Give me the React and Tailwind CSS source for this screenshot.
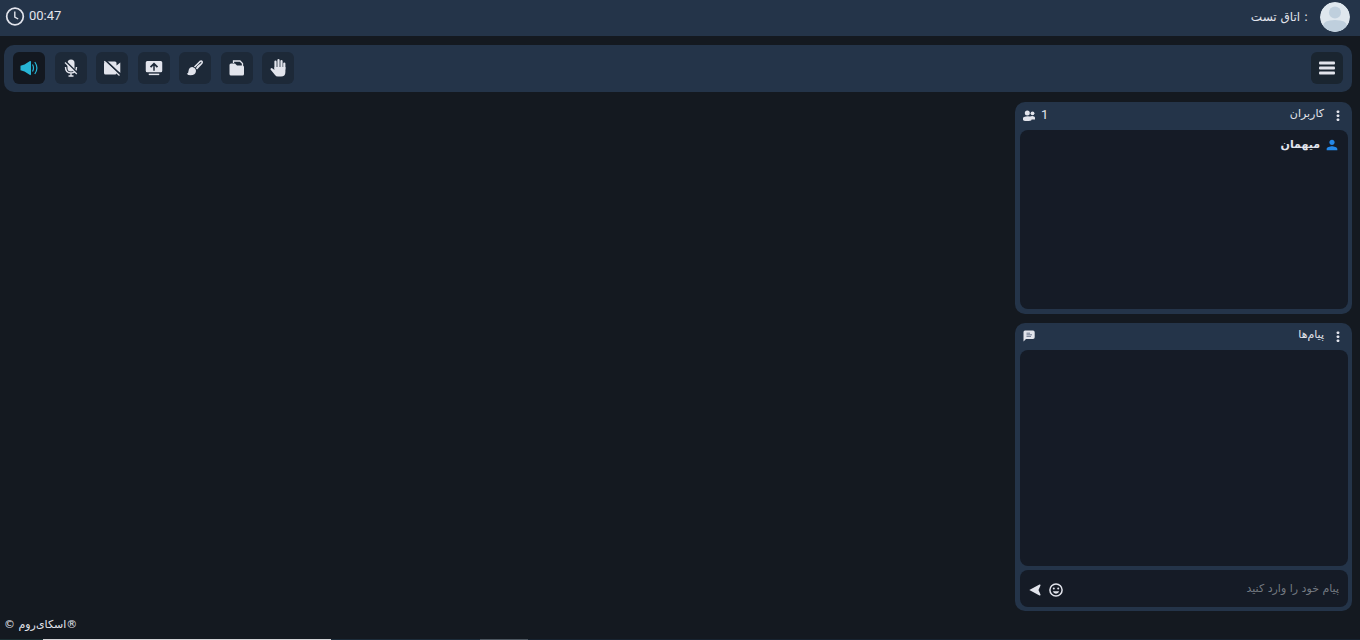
import { MdPerson } from 'react-icons/md';

function Icon({ className, children }) {
  return (
    <svg viewBox="0 0 24 24" fill="currentColor" className={className} aria-hidden="true">
      {children}
    </svg>
  );
}

function SpeakerIcon() {
  return (
    <svg viewBox="0 0 18 16" className="w-[18px] h-4" aria-hidden="true">
      <path d="M0.5 5.8L4.5 4.5L10 1Q11 .5 11 2V14Q11 15.5 10 15L4.500 11.500L.5 10.200Z" fill="currentColor" />
      <path d="M12.500 4.500Q14.500 8 12.500 11.500M14.800 2Q19 8 14.800 14" fill="none" stroke="currentColor" strokeWidth="1.200" />
    </svg>
  );
}

function MicOffIcon() {
  return (
    <svg viewBox="0 0 18 20" className="w-[18px] h-5" fill="none" aria-hidden="true">
      <rect x="5.500" y="1.500" width="7" height="12" rx="3.500" fill="currentColor" />
      <path d="M3.500 9Q3.500 15 9 15T14.500 9M9 15V18M6.500 18H11.500" stroke="currentColor" strokeWidth="1.400" />
      <path d="M4 3.500L15 14.500" stroke="#1d2938" strokeWidth="1.600" />
      <path d="M3 4.500L14.800 16" stroke="currentColor" strokeWidth="1.200" />
    </svg>
  );
}

function CameraOffIcon() {
  return (
    <svg viewBox="0 0 18 18" className="w-[18px] h-[18px]" fill="none" aria-hidden="true">
      <path d="M3 2.500H12Q13.500 2.500 13.500 4V6.500L17.300 3.500V14L13.500 11.500V14Q13.500 15.500 12 15.500H2.500Q1 15.500 1 14V4.500Q1 2.500 3 2.500Z" fill="currentColor" />
      <path d="M2.500 1.500L17.500 15.500" stroke="#1d2938" strokeWidth="1.800" />
      <path d="M1.300 2.200L16.500 16.500" stroke="currentColor" strokeWidth="1.200" />
    </svg>
  );
}

function ShareIcon() {
  return (
    <Icon className="w-[18px] h-[18px]">
      <path
        fillRule="evenodd"
        d="M3 2.500h18a2 2 0 0 1 2 2v11a2 2 0 0 1-2 2H3a2 2 0 0 1-2-2v-11a2 2 0 0 1 2-2zM12 4.500l-5.500 5.500 1.700 1.700L11 9v6.500h2V9l2.800 2.700L17.500 10z"
      />
      <path d="M5 19.500h14v2H5z" />
    </Icon>
  );
}

function BrushIcon() {
  return (
    <svg viewBox="0 0 18 18" className="w-[18px] h-[18px]" aria-hidden="true">
      <path d="M6.500 8Q10 9 10 12Q9.500 16.300 4.500 16.300Q2 16.300 .8 14.800Q2.500 14.500 2.500 12Q3 8 6.500 8Z" fill="currentColor" />
      <path d="M8.500 8L14 2.500Q15.300 1.500 16 2.500Q16.500 3.200 15.800 4.200L10.500 10" fill="none" stroke="currentColor" strokeWidth="1.600" />
      <path d="M10.500 8.500L13.500 5.300" stroke="currentColor" strokeWidth="1" />
    </svg>
  );
}

function FilesIcon() {
  return (
    <svg viewBox="0 0 18 18" className="w-[18px] h-[18px]" aria-hidden="true">
      <path d="M5.500 4V2H12L14.500 4.500V7" fill="none" stroke="currentColor" strokeWidth="1.300" />
      <path d="M3 4.500H7L9 6.500H14.500Q16 6.500 16 8V15Q16 16.500 14.500 16.500H3Q1.500 16.500 1.500 15V6Q1.500 4.500 3 4.500Z" fill="currentColor" />
    </svg>
  );
}

function HandIcon() {
  return (
    <svg viewBox="0 0 18 20" className="w-[18px] h-5" fill="none" stroke="currentColor" strokeLinecap="round" aria-hidden="true">
      <path d="M6.500 11V3.500M9.500 10V2M12.500 10V3M15.300 11V5.500" strokeWidth="2.200" />
      <path d="M5.500 9H16.400V14Q16.400 18.500 12 18.500H9Q7 18.500 6 17L1.500 11.500Q1.200 10 2.800 10L5.500 12Z" fill="currentColor" stroke="none" />
    </svg>
  );
}

function ClockIcon() {
  return (
    <svg viewBox="0 0 20 20" className="w-5 h-5" fill="none" stroke="currentColor" aria-hidden="true">
      <circle cx="10" cy="10.500" r="8.300" strokeWidth="1.700" />
      <path d="M9.800 5.500V11L13.200 13" strokeWidth="1.400" />
    </svg>
  );
}

function UsersIcon() {
  return (
    <svg viewBox="0 0 12 12" className="w-3 h-3" fill="currentColor" aria-hidden="true">
      <circle cx="4.300" cy="3" r="2.500" />
      <circle cx="9.500" cy="3.300" r="1.900" />
      <path d="M1 7Q4 5.800 7 6.500Q9.500 5.500 11.500 6.700Q12 7 12 8V9.500H8.500V10Q8 11 4 11Q0 11 0 9.500V8.300Q0 7.500 1 7Z" />
    </svg>
  );
}

function MessageIcon() {
  return (
    <svg viewBox="0 0 12 12" className="w-3 h-3" aria-hidden="true">
      <path d="M2 .5H10Q11.700 .5 11.700 2.200V7.300Q11.700 9 10 9H3L.5 11.500V2Q.5 .5 2 .5Z" fill="currentColor" />
      <path d="M3.500 3.200H7M3.500 4.800H9M3.500 6.400H8" stroke="#53627a" strokeWidth=".8" />
    </svg>
  );
}

function SmileIcon() {
  return (
    <svg viewBox="0 0 14 14" className="w-3.5 h-3.5" fill="none" stroke="currentColor" aria-hidden="true">
      <circle cx="7" cy="7" r="6.100" strokeWidth="1.500" />
      <circle cx="4.800" cy="5.400" r="1" fill="currentColor" stroke="none" />
      <circle cx="9.200" cy="5.400" r="1" fill="currentColor" stroke="none" />
      <path d="M3.800 8.300H10.200Q9.500 10.700 7 10.700T3.800 8.300Z" fill="currentColor" stroke="none" />
    </svg>
  );
}

function MoreButton({ label }) {
  return (
    <button type="button" aria-label={label} className="w-3 h-3 flex items-center justify-center">
      <svg viewBox="0 0 4 12" className="w-1 h-3" fill="currentColor" aria-hidden="true">
        <rect x="0.700" y="0.500" width="2.600" height="2.400" rx="0.700" />
        <rect x="0.700" y="4.500" width="2.600" height="2.400" rx="0.700" />
        <rect x="0.700" y="8.500" width="2.600" height="2.400" rx="0.700" />
      </svg>
    </button>
  );
}

const tools = [
  { label: 'صدا', icon: <SpeakerIcon />, active: true },
  { label: 'میکروفون', icon: <MicOffIcon /> },
  { label: 'دوربین', icon: <CameraOffIcon /> },
  { label: 'اشتراک صفحه', icon: <ShareIcon /> },
  { label: 'تخته', icon: <BrushIcon /> },
  { label: 'فایل‌ها', icon: <FilesIcon /> },
  { label: 'بلند کردن دست', icon: <HandIcon /> },
];

function Header() {
  return (
    <header className="h-9 shrink-0 bg-[#243449] flex items-center justify-between pl-[5px] pr-2.5">
      <div className="flex items-center gap-1 pb-1">
        <ClockIcon />
        <time className="font-['Roboto',sans-serif] text-[13px] leading-5">00:47</time>
      </div>
      <div dir="rtl" className="flex items-center gap-3 pb-[3px]">
        <svg viewBox="0 0 30 30" className="w-[30px] h-[30px] rounded-full" aria-hidden="true">
          <circle cx="15" cy="15" r="15" fill="#dfe7ee" />
          <circle cx="15" cy="10.500" r="6" fill="#bfcfdd" />
          <path d="M3 24Q3 18 15 18T27 24Q22 30 15 30T3 24Z" fill="#bfcfdd" />
        </svg>
        <h1 className="text-[12px] leading-5">: اتاق تست</h1>
      </div>
    </header>
  );
}

function Toolbar() {
  return (
    <div className="h-[47px] shrink-0 mt-[9px] ml-1 mr-2 px-[9px] pb-px rounded-[10px] bg-[#243449] flex items-center justify-between">
      <div className="w-[281px] flex justify-between">
        {tools.map((tool) => (
          <button
            key={tool.label}
            type="button"
            aria-label={tool.label}
            className={
              tool.active
                ? 'w-8 h-8 rounded-md flex items-center justify-center bg-[#131820] text-[#27b5d6]'
                : 'w-8 h-8 rounded-md flex items-center justify-center bg-[#1d2938]'
            }
          >
            {tool.icon}
          </button>
        ))}
      </div>
      <button type="button" aria-label="منو" className="w-8 h-8 rounded-md flex items-center justify-center bg-[#1a2530]">
        <svg viewBox="0 0 16 14" className="w-4 h-3.5" fill="currentColor" aria-hidden="true">
          <rect y="0.500" width="16" height="3" rx="1" />
          <rect y="5.500" width="16" height="3" rx="1" />
          <rect y="10.500" width="16" height="3" rx="1" />
        </svg>
      </button>
    </div>
  );
}

function UsersPanel() {
  return (
    <section className="h-[212px] shrink-0 rounded-[10px] bg-[#243449] pl-[5px] pr-1 pb-[5px] flex flex-col">
      <div dir="rtl" className="h-7 shrink-0 flex items-center justify-between pr-1 pl-[3px]">
        <div className="flex items-center gap-2">
          <MoreButton label="گزینه‌های کاربران" />
          <h2 className="text-[11px] leading-4 pb-1">کاربران</h2>
        </div>
        <div dir="ltr" className="flex items-center gap-1.5 pb-px">
          <UsersIcon />
          <span className="font-['Roboto',sans-serif] text-[13px] leading-4 pb-0.5">1</span>
        </div>
      </div>
      <ul dir="rtl" className="flex-1 rounded-lg bg-[#151b26] px-2 py-[7px]">
        <li className="flex items-center gap-1 text-[11px] leading-4 font-bold">
          <MdPerson className="w-4 h-4 text-[#2488e8]" aria-hidden="true" />
          میهمان
        </li>
      </ul>
    </section>
  );
}

function MessagesPanel() {
  return (
    <section className="flex-1 rounded-[10px] bg-[#243449] pl-[5px] pr-1 pb-1 flex flex-col">
      <div dir="rtl" className="h-[27px] shrink-0 flex items-center justify-between pr-1 pl-[3px]">
        <div className="flex items-center gap-2">
          <MoreButton label="گزینه‌های پیام‌ها" />
          <h2 className="text-[11px] leading-4 pb-1">پیام‌ها</h2>
        </div>
        <div className="pb-0.5">
          <MessageIcon />
        </div>
      </div>
      <div className="flex-1 rounded-lg bg-[#151b26]" />
      <form dir="rtl" className="h-[37px] shrink-0 mt-1 pr-[9px] pl-[9px] rounded-lg bg-[#151b26] flex items-center gap-2">
        <input
          type="text"
          aria-label="پیام"
          placeholder="پیام خود را وارد کنید"
          className="flex-1 min-w-0 bg-transparent text-[11px] leading-5 outline-none placeholder:text-[#747a82]"
        />
        <button type="button" aria-label="شکلک" className="pt-0.5">
          <SmileIcon />
        </button>
        <button type="button" aria-label="ارسال" className="pt-0.5">
          <svg viewBox="0 0 12 12" className="w-3 h-3" fill="currentColor" aria-hidden="true">
            <path d="M.3 6L10.500 .5Q11.800 .3 11.500 1.500L9.500 6L11.500 10.500Q11.800 11.700 10.500 11.500Z" />
          </svg>
        </button>
      </form>
    </section>
  );
}

export default function App() {
  return (
    <div className="h-screen min-h-[480px] flex flex-col bg-[#141920] text-[#e2e4ec] font-['DejaVu_Sans',sans-serif]">
      <Header />
      <Toolbar />
      <main className="flex-1 min-h-0 flex justify-end mt-2.5 pr-2">
        <aside className="w-[337px] flex flex-col gap-[9px]">
          <UsersPanel />
          <MessagesPanel />
        </aside>
      </main>
      <footer className="h-7 shrink-0 px-1 flex items-center">
        <p dir="rtl" className="text-[11px] leading-5">®اسکای‌روم ©</p>
      </footer>
      <div className="h-px shrink-0 flex bg-[#172330]">
        <div className="w-[43px] bg-[#1c3034]" />
        <div className="w-72 bg-[#d5d5d8]" />
        <div className="w-[149px] bg-[#1c2c3a]" />
        <div className="w-12 bg-[#4c5660]" />
      </div>
    </div>
  );
}
